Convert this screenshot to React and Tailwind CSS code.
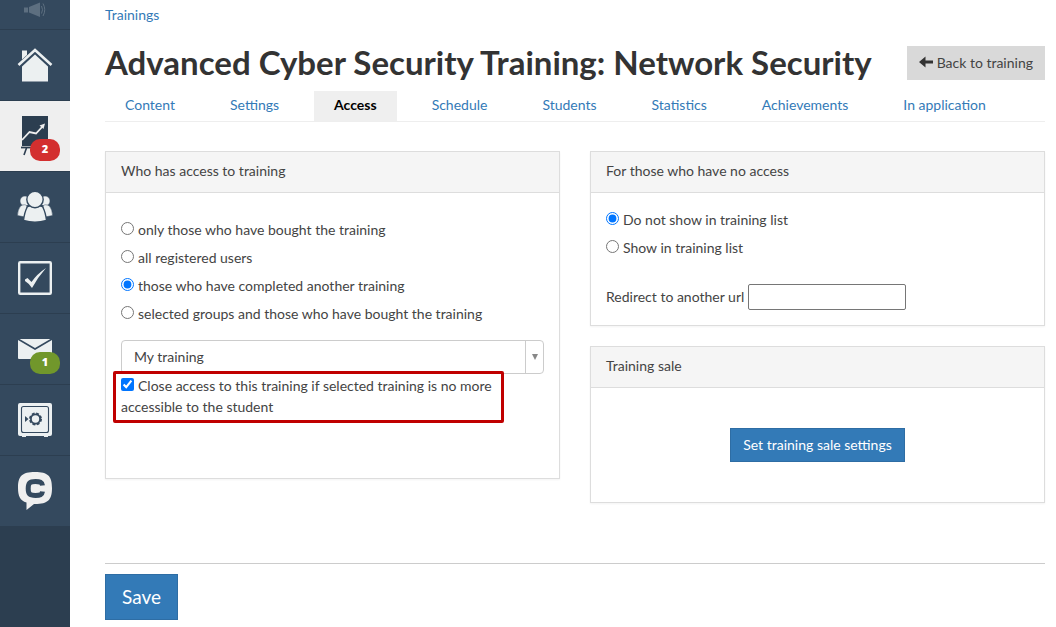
import React, { useState } from 'react';

const MegaphoneIcon = () => (
  <svg width="22" height="16" viewBox="0 0 22 16" fill="#5d6f80">
    <rect x="0" y="5.5" width="4" height="5" />
    <path d="M5 5 L16 0.5 V15 L5 10.5 Z" />
    <path d="M17.5 4 Q19.5 7.7 17.5 11.5 M19 1.5 Q22.5 7.7 19 14" fill="none" stroke="#5d6f80" strokeWidth="1" />
  </svg>
);

const HomeIcon = () => (
  <svg width="36" height="34" viewBox="0 0 36 34" fill="#ecf0f1">
    <path d="M5 2.5 H10 V7 L5 11.5 Z" />
    <path d="M1.5 17 L18 2 L34.5 17" fill="none" stroke="#ecf0f1" strokeWidth="2.6" />
    <path d="M5 18.5 L18 6.5 L31 18.5 V33.5 H5 Z" />
  </svg>
);

const TrainingIcon = () => (
  <svg width="28" height="40" viewBox="0 0 28 40">
    <rect x="1" y="0" width="26" height="30" fill="#2c3e50" />
    <path d="M1 24 L8.5 16 L15 17.5 L22 10" fill="none" stroke="#efefef" strokeWidth="1.8" />
    <path d="M24 7.5 L18.5 9.5 L22.5 13 Z" fill="#efefef" />
    <path d="M0 31.5 H28" fill="none" stroke="#2c3e50" strokeWidth="1.8" />
    <path d="M5.5 32 L3 39" fill="none" stroke="#2c3e50" strokeWidth="1.6" />
  </svg>
);

const UsersIcon = () => (
  <svg width="36" height="32" viewBox="0 0 36 32" fill="#ecf0f1" stroke="#34495e">
    <g strokeWidth="0.5">
      <circle cx="8" cy="10" r="5" />
      <circle cx="28" cy="10" r="5" />
      <path d="M3.5 15 Q8 12.5 10 15 L8 26 L0.5 24.5 Q0.5 19 3.5 15 Z" />
      <path d="M32.5 15 Q28 12.5 26 15 L28 26 L35.5 24.5 Q35.5 19 32.5 15 Z" />
    </g>
    <path d="M10.5 15.5 Q18 13 25.5 15.5 Q28.5 21 29.5 29.5 Q18 33 6.5 29.5 Q7.5 21 10.5 15.5 Z" strokeWidth="1.4" />
    <circle cx="18" cy="8.5" r="8.2" strokeWidth="1.4" />
  </svg>
);

const TasksIcon = () => (
  <svg width="34" height="34" viewBox="0 0 34 34">
    <rect x="1.2" y="1.2" width="31.6" height="31.6" rx="1" fill="none" stroke="#ecf0f1" strokeWidth="2.4" />
    <path d="M7 18.5 L9.5 17 L13.5 21 Q19 13 28 7 Q20 16 14 27 Q10.5 22 7 20 Z" fill="#ecf0f1" />
  </svg>
);

const MailIcon = () => (
  <svg width="34" height="20" viewBox="0 0 34 20">
    <rect width="34" height="20" rx="1" fill="#ecf0f1" />
    <path d="M0 0 L17 10 L34 0" fill="none" stroke="#34495e" strokeWidth="1.6" />
  </svg>
);

const SafeIcon = () => (
  <svg width="34" height="34" viewBox="0 0 34 34">
    <path d="M2 0 H32 Q34 0 34 2 V31 Q34 33 32 33 H30 V34 H26 V33 H8 V34 H4 V33 H2 Q0 33 0 31 V2 Q0 0 2 0 Z" fill="#ecf0f1" />
    <rect x="3.5" y="3.5" width="27" height="26" rx="2" fill="none" stroke="#34495e" strokeWidth="1.1" />
    <circle cx="17.5" cy="16" r="4.6" fill="none" stroke="#34495e" strokeWidth="1.8" />
    <circle cx="17.5" cy="16" r="5.6" fill="none" stroke="#34495e" strokeWidth="1.8" strokeDasharray="2.8 1.6" />
    <path d="M7 13 L10.5 16 L7 19 Z" fill="#34495e" />
  </svg>
);

const ChatiumIcon = () => (
  <svg width="34" height="38" viewBox="0 0 34 38">
    <path d="M17 0 C30 0 34 4 34 16 C34 28 30 32 17 32 L16 32 L8.5 38 V30.5 C2 28.5 0 24 0 16 C0 4 4 0 17 0 Z" fill="#efefef" />
    <path d="M24.5 13.5 C24 10 22 9.5 17.5 9.5 C11.5 9.5 10.2 11 10.2 16.5 C10.2 22 11.5 23.5 17.5 23.5 C22 23.5 24 23 24.5 19.5" fill="none" stroke="#34495e" strokeWidth="5" />
  </svg>
);

const menu = [
  { label: 'Profile', icon: HomeIcon },
  { label: 'Trainings', icon: TrainingIcon, active: true, badge: '2', badgeColor: 'bg-[#d32f2f]' },
  { label: 'Users', icon: UsersIcon },
  { label: 'Tasks', icon: TasksIcon },
  { label: 'Messages', icon: MailIcon, badge: '1', badgeColor: 'bg-[#71972b]' },
  { label: 'Sales', icon: SafeIcon },
  { label: 'Chat', icon: ChatiumIcon },
];

const tabs = [
  'Content', 'Settings', 'Access', 'Schedule',
  'Students', 'Statistics', 'Achievements', 'In application',
];

const accessOptions = [
  'only those who have bought the training',
  'all registered users',
  'those who have completed another training',
  'selected groups and those who have bought the training',
];

const noAccessOptions = ['Do not show in training list', 'Show in training list'];

const Sidebar = () => (
  <aside className="w-[70px] shrink-0 bg-[#2c3e50]">
    <nav>
      <a href="#" aria-label="Notifications" className="flex h-[30px] justify-center bg-[#34495e] border-b border-[#2c3e50] pt-0.5">
        <MegaphoneIcon />
      </a>
      {menu.map(({ label, icon: Icon, active, badge, badgeColor }) => (
        <a
          key={label}
          href="#"
          aria-label={label}
          className={`relative flex h-[71px] items-center justify-center border-b border-[#2c3e50] last:h-[70px] last:border-b-0 ${active ? 'bg-[#efefef]' : 'bg-[#34495e]'}`}
        >
          <Icon />
          {badge && (
            <span className={`absolute right-2.5 bottom-2.5 flex h-[22px] w-[30px] items-center justify-center rounded-[10px] font-['Open_Sans',sans-serif] text-[11px] leading-[18px] font-extrabold text-white pb-0.5 ${badgeColor}`}>
              {badge}
            </span>
          )}
        </a>
      ))}
    </nav>
  </aside>
);

const Panel = ({ title, className = '', children }) => (
  <section className="border border-[#ddd] shadow-xs">
    <h2 className="h-[41px] border-b border-[#ddd] bg-[#f5f5f5] px-[15px] leading-[37px]">{title}</h2>
    <div className={`px-[15px] ${className}`}>{children}</div>
  </section>
);

const RadioList = ({ name, options, value, onChange }) => (
  <div>
    {options.map((option, i) => (
      <label key={option} className="block h-7">
        <input
          type="radio"
          name={name}
          checked={value === i}
          onChange={() => onChange(i)}
          className="mr-1 h-[13px] w-[13px] align-baseline"
        />
        {option}
      </label>
    ))}
  </div>
);

export default function App() {
  const [access, setAccess] = useState(2);
  const [noAccess, setNoAccess] = useState(0);
  const [closeAccess, setCloseAccess] = useState(true);

  return (
    <div className="flex min-h-screen bg-white font-['Lato',sans-serif] text-[14px] leading-[21px] text-[#444]">
      <Sidebar />

      <main className="min-w-0 flex-1 pt-1 pr-[11px] pb-[7px] pl-[35px]">
        <a href="#" className="block text-[#337ab7]">Trainings</a>

        <header className="mt-[21px] flex items-center justify-between">
          <h1 className="pb-0.5 text-[33px] leading-[32px] font-bold text-[#333]">
            Advanced Cyber Security Training: Network Security
          </h1>
          <button type="button" className="flex h-[34px] items-center gap-1 bg-[#d9d9d9] px-3 pb-0.5">
            <svg width="14" height="12" viewBox="0 0 14 12" fill="#333">
              <path d="M0 6 L6.5 0.5 V4.5 H14 V7.5 H6.5 V11.5 Z" />
            </svg>
            Back to training
          </button>
        </header>

        <nav className="mt-[11px] flex gap-[15px] border-b border-[#eee]">
          {tabs.map((tab) => (
            <a
              key={tab}
              href="#"
              className={`h-[30px] px-5 leading-[27px] whitespace-nowrap ${tab === 'Access' ? 'bg-[#efefef] font-bold text-black' : 'text-[#337ab7]'}`}
            >
              {tab}
            </a>
          ))}
        </nav>

        <div className="mt-[29px] grid grid-cols-2 items-start gap-[30px]">
          <Panel title="Who has access to training" className="pt-[26px] pb-[61px]">
            <RadioList name="access" options={accessOptions} value={access} onChange={setAccess} />

            <div className="relative mt-[9px]">
              <select aria-label="Training" className="block h-[34px] w-full appearance-none rounded border border-[#ccc] bg-white px-3 pb-0.5">
                <option>My training</option>
              </select>
              <span className="pointer-events-none absolute inset-y-0 right-0 flex w-[19px] items-center justify-center border-l border-[#ccc]">
                <svg width="6" height="6" viewBox="0 0 6 6" fill="#888">
                  <path d="M0 0 H6 L3 6 Z" />
                </svg>
              </span>
            </div>

            <div className="relative mt-px">
              <label className="block">
                <input
                  type="checkbox"
                  checked={closeAccess}
                  onChange={() => setCloseAccess(!closeAccess)}
                  className="mr-1 h-[13px] w-[13px] align-baseline"
                />
                Close access to this training if selected training is no more accessible to the student
              </label>
              {/* highlight frame */}
              <div className="pointer-events-none absolute -top-1 right-10 -bottom-1.5 -left-2 rounded-xs border-3 border-[#c00000]" />
            </div>
          </Panel>

          <div className="flex flex-col gap-5">
            <Panel title="For those who have no access" className="pt-4 pb-[15px]">
              <RadioList name="no-access" options={noAccessOptions} value={noAccess} onChange={setNoAccess} />
              <div className="mt-[19px] flex items-center gap-1">
                <label htmlFor="redirect" className="leading-[24px]">Redirect to another url</label>
                <input id="redirect" type="text" className="h-[26px] w-[158px] rounded-xs border border-[#767676] px-1" />
              </div>
            </Panel>

            <Panel title="Training sale" className="flex justify-center py-10">
              <button type="button" className="h-[34px] border border-[#2e6da4] bg-[#337ab7] px-3 pb-0.5 text-white">
                Set training sale settings
              </button>
            </Panel>
          </div>
        </div>

        <footer className="mt-[60px] border-t border-[#ccc] pt-2.5">
          <button type="button" className="h-[46px] border border-[#2e6da4] bg-[#337ab7] px-4 pb-0.5 text-[19px] text-white">
            Save
          </button>
        </footer>
      </main>
    </div>
  );
}
